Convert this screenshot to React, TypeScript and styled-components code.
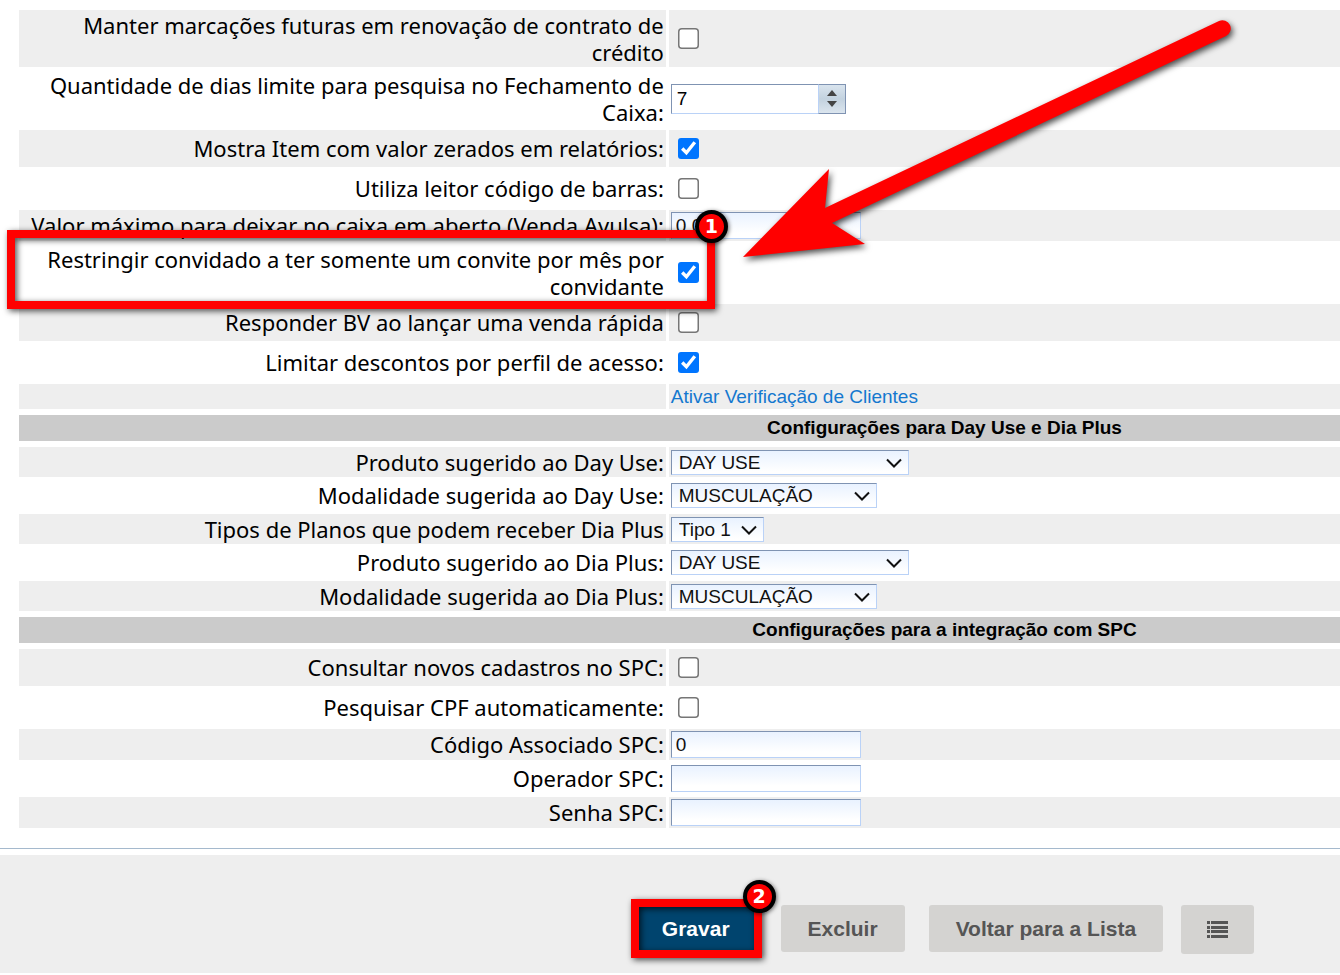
import React from "react";
import styled, { createGlobalStyle, css } from "styled-components";

const GlobalStyle = createGlobalStyle`
  * { box-sizing: border-box; }
  body { margin: 0; background: #fff; color: #000; font-family: "Liberation Sans", Arial, sans-serif; }
`;

const Page = styled.main`
  overflow: hidden;
`;

const FormArea = styled.div`
  width: 140%;
  padding: 7px 3px 0 16px;
`;

const Title = styled.h2`
  margin: 3px;
  height: 26px;
  background: #cbcbcb;
  font-size: 19px;
  line-height: 25px;
  font-weight: bold;
  text-align: center;
`;

const Settings = styled.table`
  width: 100%;
  table-layout: fixed;
  border-spacing: 3px;
`;

type Kind = "double" | "check" | "text" | "select" | "link";
const rowHeights: Record<Kind, number> = { double: 57, check: 37, text: 31, select: 30, link: 25 };

const Row = styled.tr<{ $kind: Kind }>`
  height: ${(p) => rowHeights[p.$kind]}px;
  &:nth-child(odd) > * { background: #eee; }
  ${(p) => p.$kind === "select" && css`&:nth-child(even) { height: 31px; }`}
`;

const LabelCell = styled.th`
  position: relative;
  width: 35%;
  padding: 0 2px;
  font-family: "Noto Sans", sans-serif;
  font-size: 22px;
  line-height: 27px;
  font-weight: normal;
  text-align: right;
`;

const ControlCell = styled.td`
  padding: 0 2px;
  font-size: 19px;
  line-height: 25px;
`;

const Check = styled.input.attrs({ type: "checkbox" })`
  display: block;
  zoom: 1.5;
  width: 14px;
  height: 14px;
  margin: 0 5px;
`;

const sunken = css`
  border: 1px solid;
  border-color: #7f93b2 #bad2f7 #bad2f7 #7f93b2;
  font-family: inherit;
  font-size: 19px;
  color: #111;
`;

const TextBox = styled.input`
  ${sunken}
  display: block;
  width: 190px;
  height: 27px;
  padding: 0 4px;
  background: linear-gradient(#e9f2ff, #fff 80%);
`;

const Spinner = styled.div`
  ${sunken}
  display: flex;
  width: 175px;
  height: 30px;
`;

const SpinnerInput = styled.input`
  flex: 1;
  min-width: 0;
  padding: 0 5px;
  border: 0;
  background: #fff;
  font: inherit;
`;

const SpinnerButtons = styled.div`
  display: flex;
  flex-direction: column;
  width: 28px;
  margin: -1px -1px -1px 0;
  padding: 3px 0;
  border: 1px solid #7f93b2;
  border-left-color: #bad2f7;
  background: linear-gradient(#d9e4ee, #c3d2df 50%, #dbe5ee);
`;

const SpinButton = styled.button`
  display: flex;
  flex: 1;
  align-items: center;
  justify-content: center;
  padding: 0;
  border: 0;
  background: none;
`;

const SelectWrap = styled.div<{ $width: number }>`
  position: relative;
  width: ${(p) => p.$width}px;
  svg { position: absolute; right: 7px; top: 8px; pointer-events: none; }
`;

const Select = styled.select`
  ${sunken}
  display: block;
  appearance: none;
  width: 100%;
  height: 25px;
  padding: 0 7px;
  border-radius: 0;
  background: linear-gradient(#e9f2ff, #fff 90%);
`;

const Link = styled.a`
  color: #1478cf;
  text-decoration: none;
  line-height: 25px;
  display: block;
`;

const Rule = styled.hr`
  margin: 17px 0 6px;
  border: 0;
  border-top: 1px solid #a5b9cd;
`;

const Footer = styled.footer`
  height: 118px;
  padding-top: 50px;
  background: #eee;
`;

const Actions = styled.div`
  display: flex;
  align-items: flex-start;
  justify-content: center;
  gap: 24px;
  width: 140%;
  padding: 0 3px 0 16px;
`;

const ListGroup = styled.div`
  display: flex;
  align-items: flex-start;
  gap: 18px;
`;

const Button = styled.button<{ $primary?: boolean; $icon?: boolean }>`
  display: flex;
  align-items: center;
  justify-content: center;
  height: ${(p) => (p.$icon ? 49 : 47)}px;
  padding: 0 ${(p) => (p.$icon ? 26 : 27)}px;
  border: 0;
  border-radius: 3px;
  background: ${(p) => (p.$primary ? "#00446e" : "#d4d3d1")};
  color: ${(p) => (p.$primary ? "#fff" : "#555")};
  font-family: inherit;
  font-size: 21px;
  line-height: 25px;
  font-weight: bold;
`;

const Marked = styled.div`
  position: relative;
`;

const Frame = styled.div<{ $inset: string }>`
  position: absolute;
  z-index: 1;
  inset: ${(p) => p.$inset};
  border: 8px solid #f00;
  filter: drop-shadow(2px 2px 3px rgba(0, 0, 0, 0.7));
  pointer-events: none;
`;

const Badge = styled.span<{ $inset: string }>`
  position: absolute;
  z-index: 3;
  inset: ${(p) => p.$inset};
  width: 33px;
  height: 33px;
  border: 4px solid #000;
  border-radius: 50%;
  background: #f00;
  box-shadow: 1px 1px 4px rgba(0, 0, 0, 0.6);
  color: #fff;
  font-family: "DejaVu Sans", sans-serif;
  font-size: 19px;
  line-height: 25px;
  font-weight: bold;
  text-align: center;
`;

const Arrow = styled.svg`
  position: absolute;
  z-index: 2;
  left: calc(100% + 64px);
  bottom: 30px;
  overflow: visible;
  filter: drop-shadow(2px 3px 3px rgba(0, 0, 0, 0.7));
  pointer-events: none;
`;

interface FieldProps {
  id: string;
  label: string;
  kind: Kind;
  mark?: React.ReactNode;
  children: React.ReactNode;
}

const Field = ({ id, label, kind, mark, children }: FieldProps) => (
  <Row $kind={kind}>
    <LabelCell scope="row">
      <label htmlFor={id}>{label}</label>
      {mark}
    </LabelCell>
    <ControlCell>{children}</ControlCell>
  </Row>
);

const CheckField = ({ id, label, checked, tall, mark }: { id: string; label: string; checked?: boolean; tall?: boolean; mark?: React.ReactNode }) => (
  <Field id={id} label={label} kind={tall ? "double" : "check"} mark={mark}>
    <Check id={id} defaultChecked={checked} />
  </Field>
);

const TextField = ({ id, label, value = "", type = "text" }: { id: string; label: string; value?: string; type?: string }) => (
  <Field id={id} label={label} kind="text">
    <TextBox id={id} type={type} defaultValue={value} />
  </Field>
);

const SelectField = ({ id, label, value, width }: { id: string; label: string; value: string; width: number }) => (
  <Field id={id} label={label} kind="select">
    <SelectWrap $width={width}>
      <Select id={id}>
        <option>{value}</option>
      </Select>
      <svg width="16" height="10" viewBox="0 0 16 10" fill="none" stroke="#111" strokeWidth="2">
        <path d="M1 1.5 8 8.5 15 1.5" />
      </svg>
    </SelectWrap>
  </Field>
);

export default function App() {
  return (
    <>
      <GlobalStyle />
      <Page>
        <FormArea>
          <Settings>
            <tbody>
              <CheckField id="marcacoes" label="Manter marcações futuras em renovação de contrato de crédito" tall />
              <Field id="dias" label="Quantidade de dias limite para pesquisa no Fechamento de Caixa:" kind="double">
                <Spinner>
                  <SpinnerInput id="dias" type="text" inputMode="numeric" defaultValue="7" />
                  <SpinnerButtons>
                    <SpinButton type="button" aria-label="Aumentar">
                      <svg width="10" height="6" viewBox="0 0 10 6"><path d="M5 0 10 6H0Z" fill="#444" /></svg>
                    </SpinButton>
                    <SpinButton type="button" aria-label="Diminuir">
                      <svg width="10" height="6" viewBox="0 0 10 6"><path d="M0 0H10L5 6Z" fill="#444" /></svg>
                    </SpinButton>
                  </SpinnerButtons>
                </Spinner>
              </Field>
              <CheckField id="zerados" label="Mostra Item com valor zerados em relatórios:" checked />
              <CheckField id="leitor" label="Utiliza leitor código de barras:" />
              <TextField id="maximo" label="Valor máximo para deixar no caixa em aberto (Venda Avulsa):" value="0,00" />
              <CheckField
                id="restringir"
                label="Restringir convidado a ter somente um convite por mês por convidante"
                checked
                tall
                mark={
                  <>
                    <Frame $inset="-14px -49px -8px -12px" />
                    <Badge $inset="-34px -62px auto auto">1</Badge>
                    <Arrow width="500" height="252" viewBox="730 20 500 252">
                      <path
                        d="M743 258 829 170 825 209 1219 22A8 8 0 0 1 1226 37L832 224 865 245Z"
                        fill="#f00"
                      />
                    </Arrow>
                  </>
                }
              />
              <CheckField id="bv" label="Responder BV ao lançar uma venda rápida" />
              <CheckField id="descontos" label="Limitar descontos por perfil de acesso:" checked />
              <Row $kind="link">
                <LabelCell as="td" />
                <ControlCell>
                  <Link href="#clientes">Ativar Verificação de Clientes</Link>
                </ControlCell>
              </Row>
            </tbody>
          </Settings>

          <Title>Configurações para Day Use e Dia Plus</Title>
          <Settings>
            <tbody>
              <SelectField id="produto-day" label="Produto sugerido ao Day Use:" value="DAY USE" width={238} />
              <SelectField id="modalidade-day" label="Modalidade sugerida ao Day Use:" value="MUSCULAÇÃO" width={206} />
              <SelectField id="tipos" label="Tipos de Planos que podem receber Dia Plus" value="Tipo 1" width={93} />
              <SelectField id="produto-dia" label="Produto sugerido ao Dia Plus:" value="DAY USE" width={238} />
              <SelectField id="modalidade-dia" label="Modalidade sugerida ao Dia Plus:" value="MUSCULAÇÃO" width={206} />
            </tbody>
          </Settings>

          <Title>Configurações para a integração com SPC</Title>
          <Settings>
            <tbody>
              <CheckField id="consultar" label="Consultar novos cadastros no SPC:" />
              <CheckField id="cpf" label="Pesquisar CPF automaticamente:" />
              <TextField id="codigo" label="Código Associado SPC:" value="0" />
              <TextField id="operador" label="Operador SPC:" />
              <TextField id="senha" label="Senha SPC:" type="password" />
            </tbody>
          </Settings>
        </FormArea>
        <Rule />
        <Footer>
          <Actions>
            <Marked>
              <Button type="button" $primary>Gravar</Button>
              <Frame $inset="-6px -5px -6px -4px" />
              <Badge $inset="-25px -19px auto auto">2</Badge>
            </Marked>
            <Button type="button">Excluir</Button>
            <ListGroup>
              <Button type="button">Voltar para a Lista</Button>
              <Button type="button" $icon aria-label="Lista">
                <svg width="21" height="17" viewBox="0 0 21 17" fill="#555">
                  <path d="M0 0h3v3H0zM4 0h17v3H4zM0 5h3v3H0zM4 5h17v3H4zM0 9h3v3H0zM4 9h17v3H4zM0 14h3v3H0zM4 14h17v3H4z" />
                </svg>
              </Button>
            </ListGroup>
          </Actions>
        </Footer>
      </Page>
    </>
  );
}
